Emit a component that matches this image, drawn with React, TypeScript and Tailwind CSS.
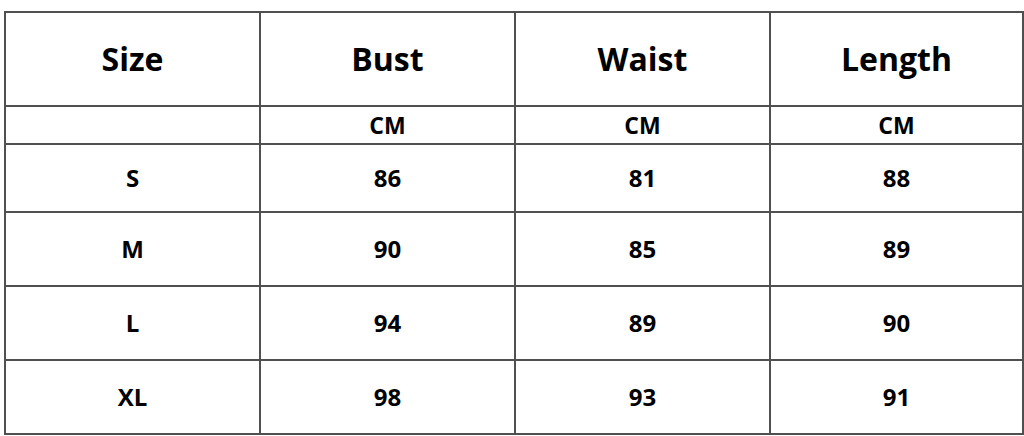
import React from 'react';

const rows = [
  ['S', '86', '81', '88'],
  ['M', '90', '85', '89'],
  ['L', '94', '89', '90'],
  ['XL', '98', '93', '91'],
];

const cell = 'flex items-center justify-center border-r-2 border-b-2 border-[#505050] text-black font-bold';

export default function App() {
  return (
    <div className="w-[1024px] h-[436px] bg-white overflow-hidden" style={{ fontFamily: '"Open Sans", "Liberation Sans", sans-serif' }}>
      <div className="ml-[4px] mt-[11px] grid grid-cols-[255px_255px_255px_253px] border-l-2 border-t-2 border-[#505050]">
        {/* header */}
        {['Size', 'Bust', 'Waist', 'Length'].map((h) => (
          <div key={h} className={`${cell} h-[94px] text-[32px]`}>{h}</div>
        ))}
        {/* units */}
        {['', 'CM', 'CM', 'CM'].map((u, i) => (
          <div key={i} className={`${cell} h-[38px] text-[23px]`}>{u}</div>
        ))}
        {rows.map((r, ri) =>
          r.map((v, ci) => (
            <div key={`${ri}-${ci}`} className={`${cell} ${ri === 0 ? 'h-[68px]' : 'h-[74px]'} text-[24px]`}>
              {v}
            </div>
          ))
        )}
      </div>
    </div>
  );
}
